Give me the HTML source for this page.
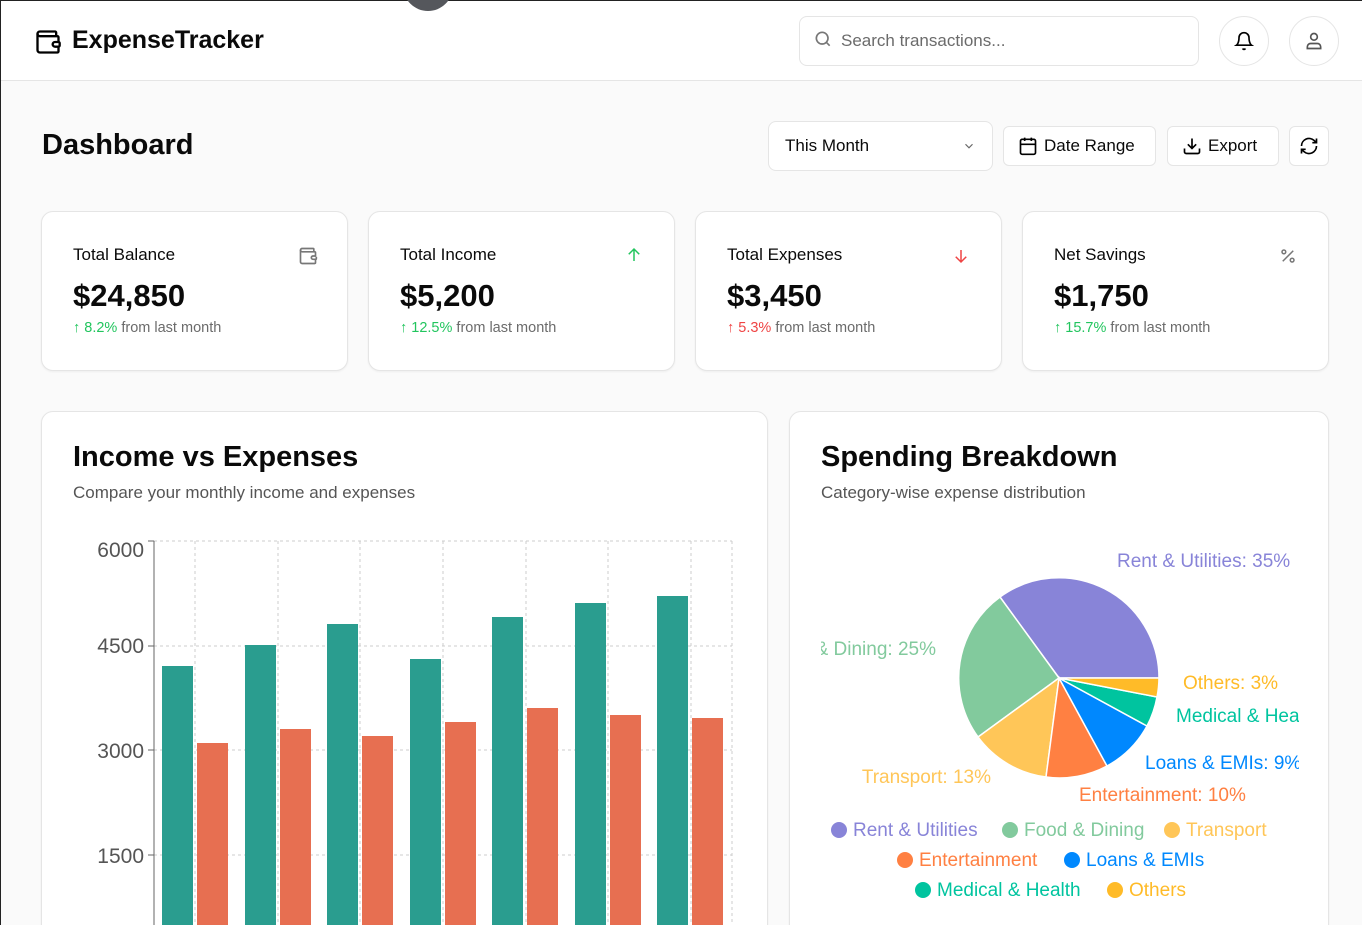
<!DOCTYPE html>
<html style="overflow:hidden;height:925px"><head><meta charset="utf-8"><style>
*{box-sizing:border-box;margin:0;padding:0}
body{width:1362px;height:925px;overflow:hidden;background:#fafafa;font-family:"Liberation Sans",sans-serif;color:#0a0a0a;position:relative;border-left:1px solid #222;border-top:1px solid #222}
.hdr{position:absolute;left:0;top:0;width:1362px;height:80px;background:#fff;border-bottom:1px solid #e5e5e5}
.abs{position:absolute}
.card{position:absolute;background:#fff;border:1px solid #e5e5e5;border-radius:12px;box-shadow:0 1px 2px rgba(0,0,0,.05)}
.btn{position:absolute;background:#fff;border:1px solid #e5e5e5;border-radius:6px;height:40px;font-size:17px;display:flex;align-items:center;gap:6px;padding:0 14px}
.lbl{position:absolute;left:31px;top:33px;font-size:17px}
.val{position:absolute;left:31px;top:66px;font-size:31px;font-weight:bold}
.chg{position:absolute;left:31px;top:108px;font-size:14.5px;color:#6b6b6b}
.g{color:#22c55e}.r{color:#ef4444}
</style></head><body>
<div class="hdr">
<svg class="abs" style="left:33px;top:27px" width="28" height="28" viewBox="0 0 24 24" fill="none" stroke="#000" stroke-width="2" stroke-linecap="round" stroke-linejoin="round"><path d="M19 7V4a1 1 0 0 0-1-1H5a2 2 0 0 0 0 4h15a1 1 0 0 1 1 1v4h-3a2 2 0 0 0 0 4h3a1 1 0 0 0 1-1v-2a1 1 0 0 0-1-1"/><path d="M3 5v14a2 2 0 0 0 2 2h15a1 1 0 0 0 1-1v-4"/></svg>
<div class="abs" style="left:71px;top:25px;font-size:25px;font-weight:bold">ExpenseTracker</div>
<div class="abs" style="left:798px;top:15px;width:400px;height:50px;border:1px solid #e5e5e5;border-radius:8px"></div>
<svg class="abs" style="left:812px;top:28px" width="20" height="20" viewBox="0 0 24 24" fill="none" stroke="#777" stroke-width="2"><circle cx="11" cy="11" r="7"/><path d="M20 20l-4-4"/></svg>
<div class="abs" style="left:840px;top:30px;font-size:17px;color:#6b6b6b">Search transactions...</div>
<div class="abs" style="left:1218px;top:15px;width:50px;height:50px;border:1px solid #e5e5e5;border-radius:50%"></div>
<svg class="abs" style="left:1233px;top:30px" width="20" height="20" viewBox="0 0 24 24" fill="none" stroke="#000" stroke-width="2"><path d="M6 8a6 6 0 0 1 12 0c0 7 3 9 3 9H3s3-2 3-9"/><path d="M10.3 21a1.9 1.9 0 0 0 3.4 0"/></svg>
<div class="abs" style="left:1288px;top:15px;width:50px;height:50px;border:1px solid #e5e5e5;border-radius:50%"></div>
<svg class="abs" style="left:1303px;top:30px" width="20" height="20" viewBox="0 0 24 24" fill="none" stroke="#555" stroke-width="2"><circle cx="12" cy="7" r="4"/><path d="M4 21v-2a4 4 0 0 1 4-4h8a4 4 0 0 1 4 4v2z"/></svg>
</div>
<div class="abs" style="left:402px;top:-40px;width:50px;height:50px;border-radius:50%;background:#55575c"></div>

<div class="abs" style="left:41px;top:128px;font-size:29px;font-weight:bold">Dashboard</div>
<div class="btn" style="left:767px;top:120px;width:225px;height:50px;border-radius:8px;justify-content:space-between;padding:0 16px"><span>This Month</span><svg width="14" height="14" viewBox="0 0 24 24" fill="none" stroke="#666" stroke-width="2"><path d="M6 9l6 6 6-6"/></svg></div>
<div class="btn" style="left:1002px;top:125px;width:153px"><svg width="20" height="20" viewBox="0 0 24 24" fill="none" stroke="#000" stroke-width="2"><rect x="3" y="4" width="18" height="18" rx="2"/><path d="M16 2v4M8 2v4M3 10h18"/></svg>Date Range</div>
<div class="btn" style="left:1166px;top:125px;width:112px"><svg width="20" height="20" viewBox="0 0 24 24" fill="none" stroke="#000" stroke-width="2"><path d="M21 15v4a2 2 0 0 1-2 2H5a2 2 0 0 1-2-2v-4M7 10l5 5 5-5M12 15V3"/></svg>Export</div>
<div class="btn" style="left:1288px;top:125px;width:40px;padding:0 9px"><svg width="20" height="20" viewBox="0 0 24 24" fill="none" stroke="#000" stroke-width="2"><path d="M3 12a9 9 0 0 1 15-6.7L21 8M21 3v5h-5M21 12a9 9 0 0 1-15 6.7L3 16M8 16H3v5"/></svg></div>

<div class="card" style="left:40px;top:210px;width:307px;height:160px"><div class="lbl">Total Balance</div><svg class="abs" style="left:256px;top:34px" width="20" height="20" viewBox="0 0 24 24" fill="none" stroke="#777" stroke-width="2"><path d="M19 7V4a1 1 0 0 0-1-1H5a2 2 0 0 0 0 4h15a1 1 0 0 1 1 1v4h-3a2 2 0 0 0 0 4h3a1 1 0 0 0 1-1v-2"/><path d="M3 5v14a2 2 0 0 0 2 2h15a1 1 0 0 0 1-1v-4"/></svg><div class="val">$24,850</div><div class="chg"><span class="g">↑ 8.2%</span> from last month</div></div>
<div class="card" style="left:367px;top:210px;width:307px;height:160px"><div class="lbl">Total Income</div><svg class="abs" style="left:256px;top:34px" width="18" height="18" viewBox="0 0 24 24" fill="none" stroke="#22c55e" stroke-width="2"><path d="M12 20V4M5 11l7-7 7 7"/></svg><div class="val">$5,200</div><div class="chg"><span class="g">↑ 12.5%</span> from last month</div></div>
<div class="card" style="left:694px;top:210px;width:307px;height:160px"><div class="lbl">Total Expenses</div><svg class="abs" style="left:256px;top:35px" width="18" height="18" viewBox="0 0 24 24" fill="none" stroke="#ef4444" stroke-width="2"><path d="M12 4v16M5 13l7 7 7-7"/></svg><div class="val">$3,450</div><div class="chg"><span class="r">↑ 5.3%</span> from last month</div></div>
<div class="card" style="left:1021px;top:210px;width:307px;height:160px"><div class="lbl">Net Savings</div><svg class="abs" style="left:256px;top:35px" width="18" height="18" viewBox="0 0 24 24" fill="none" stroke="#777" stroke-width="2"><path d="M19 5L5 19"/><circle cx="6.5" cy="6.5" r="2.5"/><circle cx="17.5" cy="17.5" r="2.5"/></svg><div class="val">$1,750</div><div class="chg"><span class="g">↑ 15.7%</span> from last month</div></div>

<div class="card" style="left:40px;top:410px;width:727px;height:540px">
<div class="abs" style="left:31px;top:29px;font-size:29px;font-weight:bold">Income vs Expenses</div>
<div class="abs" style="left:31px;top:71px;font-size:17px;color:#555">Compare your monthly income and expenses</div>
</div>
<svg class="abs" style="left:0;top:0" width="1362" height="925">
<g stroke="#ccc" stroke-dasharray="3 3" fill="none">
<path d="M153 540H731M153 645H731M153 749H731M153 854H731"/>
<path d="M194 540V925M277 540V925M359 540V925M442 540V925M525 540V925M607 540V925M690 540V925M731 540V925"/>
</g>
<path d="M153 540V925M147 540H153M147 645H153M147 749H153M147 854H153" stroke="#666" fill="none"/>
<g font-size="21" fill="#555" text-anchor="end" font-family="Liberation Sans"><text x="143" y="556">6000</text><text x="143" y="652">4500</text><text x="143" y="757">3000</text><text x="143" y="862">1500</text></g>
<g fill="#2a9d8f"><rect x="161" y="665" width="31" height="260"/><rect x="244" y="644" width="31" height="281"/><rect x="326" y="623" width="31" height="302"/><rect x="409" y="658" width="31" height="267"/><rect x="491" y="616" width="31" height="309"/><rect x="574" y="602" width="31" height="323"/><rect x="656" y="595" width="31" height="330"/></g>
<g fill="#e76f51"><rect x="196" y="742" width="31" height="183"/><rect x="279" y="728" width="31" height="197"/><rect x="361" y="735" width="31" height="190"/><rect x="444" y="721" width="31" height="204"/><rect x="526" y="707" width="31" height="218"/><rect x="609" y="714" width="31" height="211"/><rect x="691" y="717" width="31" height="208"/></g>
</svg>

<div class="card" style="left:788px;top:410px;width:540px;height:540px;overflow:hidden">
<div class="abs" style="left:31px;top:29px;font-size:29px;font-weight:bold">Spending Breakdown</div>
<div class="abs" style="left:31px;top:71px;font-size:17px;color:#555">Category-wise expense distribution</div>
<div class="abs" style="left:31px;top:120px;width:478px;height:420px;overflow:hidden">
<svg class="abs" style="left:-820px;top:-531px" width="1362" height="925" font-family="Liberation Sans" font-size="19">
<g stroke="#fff" stroke-width="1.5">
<path d="M1058 677L1158 677A100 100 0 0 0 999 596Z" fill="#8884d8"/>
<path d="M1058 677L999 596A100 100 0 0 0 977 736Z" fill="#82ca9d"/>
<path d="M1058 677L977 736A100 100 0 0 0 1045 776Z" fill="#ffc658"/>
<path d="M1058 677L1045 776A100 100 0 0 0 1106 765Z" fill="#ff8042"/>
<path d="M1058 677L1106 765A100 100 0 0 0 1146 725Z" fill="#0088fe"/>
<path d="M1058 677L1146 725A100 100 0 0 0 1156 696Z" fill="#00c49f"/>
<path d="M1058 677L1156 696A100 100 0 0 0 1158 677Z" fill="#ffbb28"/>
</g>
<text x="1116" y="566" fill="#8884d8">Rent &amp; Utilities: 35%</text>
<text x="935" y="654" fill="#82ca9d" text-anchor="end">Food &amp; Dining: 25%</text>
<text x="1182" y="688" fill="#ffbb28">Others: 3%</text>
<text x="1175" y="721" fill="#00c49f">Medical &amp; Health: 5%</text>
<text x="1144" y="768" fill="#0088fe">Loans &amp; EMIs: 9%</text>
<text x="990" y="782" fill="#ffc658" text-anchor="end">Transport: 13%</text>
<text x="1078" y="800" fill="#ff8042">Entertainment: 10%</text>
<circle cx="838" cy="829" r="8" fill="#8884d8"/><text x="852" y="835" fill="#8884d8">Rent &amp; Utilities</text>
<circle cx="1009" cy="829" r="8" fill="#82ca9d"/><text x="1023" y="835" fill="#82ca9d">Food &amp; Dining</text>
<circle cx="1171" cy="829" r="8" fill="#ffc658"/><text x="1185" y="835" fill="#ffc658">Transport</text>
<circle cx="904" cy="859" r="8" fill="#ff8042"/><text x="918" y="865" fill="#ff8042">Entertainment</text>
<circle cx="1071" cy="859" r="8" fill="#0088fe"/><text x="1085" y="865" fill="#0088fe">Loans &amp; EMIs</text>
<circle cx="922" cy="889" r="8" fill="#00c49f"/><text x="936" y="895" fill="#00c49f">Medical &amp; Health</text>
<circle cx="1114" cy="889" r="8" fill="#ffbb28"/><text x="1128" y="895" fill="#ffbb28">Others</text>
</svg>
</div>
</div>
</body></html>
